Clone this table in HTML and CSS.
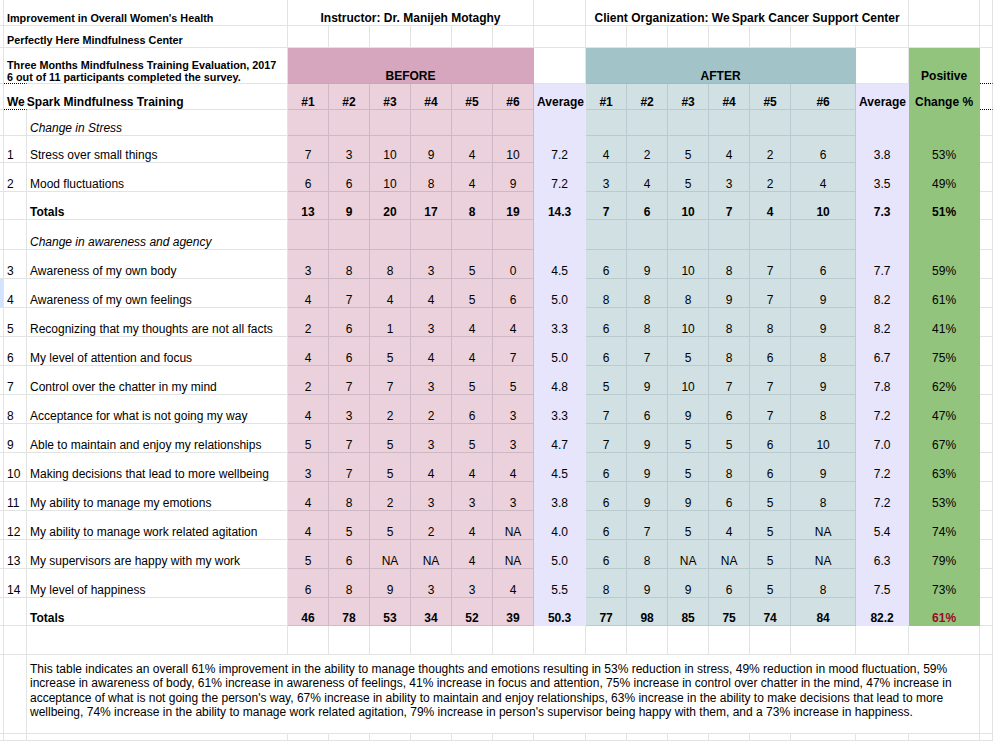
FILE: index.html
```html
<!DOCTYPE html>
<html lang="en">
<head>
<meta charset="utf-8">
<title>Mindfulness Training Evaluation</title>
<link rel="stylesheet" href="styles.css">
</head>
<body>
<table class="sheet">
  <colgroup>
    <col class="w-e"><col class="w-a"><col class="w-b">
    <col class="w-n"><col class="w-n"><col class="w-n"><col class="w-n"><col class="w-n"><col class="w-n">
    <col class="w-avb">
    <col class="w-n"><col class="w-n"><col class="w-n"><col class="w-n"><col class="w-n"><col class="w-n6">
    <col class="w-ava"><col class="w-pos"><col class="w-x">
  </colgroup>
  <tbody>
    <tr class="h26">
      <td class="e"></td><td colspan="2" class="t">Improvement in Overall Women's Health</td>
      <td colspan="6" class="hc">Instructor: Dr. Manijeh Motaghy</td>
      <td></td>
      <td colspan="7" class="hc">Client Organization: We<span class="sp">Spark</span> Cancer Support Center</td>
      <td></td><td class="x"></td>
    </tr>
    <tr class="h22">
      <td class="e"></td><td colspan="2" class="t">Perfectly Here Mindfulness Center</td>
      <td></td><td></td><td></td><td></td><td></td><td></td><td></td>
      <td></td><td></td><td></td><td></td><td></td><td></td><td></td>
      <td></td><td class="x"></td>
    </tr>
    <tr class="h36">
      <td class="e"></td><td class="ov t two">Three Months Mindfulness Training Evaluation, 2017<br>6 out of 11 participants completed the survey.</td><td></td>
      <td colspan="6" class="bh">BEFORE</td>
      <td></td>
      <td colspan="6" class="ah">AFTER</td>
      <td></td>
      <td class="gh">Positive</td>
      <td class="x dot"></td>
    </tr>
    <tr class="h26 dr b">
      <td class="e"></td><td class="ov">We<span class="sp">Spark</span> Mindfulness Training</td><td></td>
      <td>#1</td><td>#2</td><td>#3</td><td>#4</td><td>#5</td><td>#6</td><td>Average</td>
      <td>#1</td><td>#2</td><td>#3</td><td>#4</td><td>#5</td><td>#6</td><td>Average</td>
      <td>Change %</td><td class="x dot"></td>
    </tr>
    <tr class="h26 dr">
      <td class="e"></td><td></td><td class="it">Change in Stress</td>
      <td></td><td></td><td></td><td></td><td></td><td></td><td></td>
      <td></td><td></td><td></td><td></td><td></td><td></td><td></td>
      <td></td><td class="x"></td>
    </tr>
    <tr class="h27 dr">
      <td class="e"></td><td>1</td><td>Stress over small things</td>
      <td>7</td><td>3</td><td>10</td><td>9</td><td>4</td><td>10</td><td>7.2</td>
      <td>4</td><td>2</td><td>5</td><td>4</td><td>2</td><td>6</td><td>3.8</td>
      <td>53%</td><td class="x"></td>
    </tr>
    <tr class="h29 dr">
      <td class="e"></td><td>2</td><td>Mood fluctuations</td>
      <td>6</td><td>6</td><td>10</td><td>8</td><td>4</td><td>9</td><td>7.2</td>
      <td>3</td><td>4</td><td>5</td><td>3</td><td>2</td><td>4</td><td>3.5</td>
      <td>49%</td><td class="x"></td>
    </tr>
    <tr class="h28 dr b">
      <td class="e"></td><td></td><td>Totals</td>
      <td>13</td><td>9</td><td>20</td><td>17</td><td>8</td><td>19</td><td>14.3</td>
      <td>7</td><td>6</td><td>10</td><td>7</td><td>4</td><td>10</td><td>7.3</td>
      <td>51%</td><td class="x"></td>
    </tr>
    <tr class="h30 dr">
      <td class="e"></td><td></td><td class="it">Change in awareness and agency</td>
      <td></td><td></td><td></td><td></td><td></td><td></td><td></td>
      <td></td><td></td><td></td><td></td><td></td><td></td><td></td>
      <td></td><td class="x"></td>
    </tr>
    <tr class="h29 dr">
      <td class="e"></td><td>3</td><td>Awareness of my own body</td>
      <td>3</td><td>8</td><td>8</td><td>3</td><td>5</td><td>0</td><td>4.5</td>
      <td>6</td><td>9</td><td>10</td><td>8</td><td>7</td><td>6</td><td>7.7</td>
      <td>59%</td><td class="x"></td>
    </tr>
    <tr class="h29 dr">
      <td class="e sel"></td><td>4</td><td>Awareness of my own feelings</td>
      <td>4</td><td>7</td><td>4</td><td>4</td><td>5</td><td>6</td><td>5.0</td>
      <td>8</td><td>8</td><td>8</td><td>9</td><td>7</td><td>9</td><td>8.2</td>
      <td>61%</td><td class="x"></td>
    </tr>
    <tr class="h29 dr">
      <td class="e"></td><td>5</td><td>Recognizing that my thoughts are not all facts</td>
      <td>2</td><td>6</td><td>1</td><td>3</td><td>4</td><td>4</td><td>3.3</td>
      <td>6</td><td>8</td><td>10</td><td>8</td><td>8</td><td>9</td><td>8.2</td>
      <td>41%</td><td class="x"></td>
    </tr>
    <tr class="h29 dr">
      <td class="e"></td><td>6</td><td>My level of attention and focus</td>
      <td>4</td><td>6</td><td>5</td><td>4</td><td>4</td><td>7</td><td>5.0</td>
      <td>6</td><td>7</td><td>5</td><td>8</td><td>6</td><td>8</td><td>6.7</td>
      <td>75%</td><td class="x"></td>
    </tr>
    <tr class="h29 dr">
      <td class="e"></td><td>7</td><td>Control over the chatter in my mind</td>
      <td>2</td><td>7</td><td>7</td><td>3</td><td>5</td><td>5</td><td>4.8</td>
      <td>5</td><td>9</td><td>10</td><td>7</td><td>7</td><td>9</td><td>7.8</td>
      <td>62%</td><td class="x"></td>
    </tr>
    <tr class="h29 dr">
      <td class="e"></td><td>8</td><td>Acceptance for what is not going my way</td>
      <td>4</td><td>3</td><td>2</td><td>2</td><td>6</td><td>3</td><td>3.3</td>
      <td>7</td><td>6</td><td>9</td><td>6</td><td>7</td><td>8</td><td>7.2</td>
      <td>47%</td><td class="x"></td>
    </tr>
    <tr class="h29 dr">
      <td class="e"></td><td>9</td><td>Able to maintain and enjoy my relationships</td>
      <td>5</td><td>7</td><td>5</td><td>3</td><td>5</td><td>3</td><td>4.7</td>
      <td>7</td><td>9</td><td>5</td><td>5</td><td>6</td><td>10</td><td>7.0</td>
      <td>67%</td><td class="x"></td>
    </tr>
    <tr class="h29 dr">
      <td class="e"></td><td>10</td><td>Making decisions that lead to more wellbeing</td>
      <td>3</td><td>7</td><td>5</td><td>4</td><td>4</td><td>4</td><td>4.5</td>
      <td>6</td><td>9</td><td>5</td><td>8</td><td>6</td><td>9</td><td>7.2</td>
      <td>63%</td><td class="x"></td>
    </tr>
    <tr class="h29 dr">
      <td class="e"></td><td>11</td><td>My ability to manage my emotions</td>
      <td>4</td><td>8</td><td>2</td><td>3</td><td>3</td><td>3</td><td>3.8</td>
      <td>6</td><td>9</td><td>9</td><td>6</td><td>5</td><td>8</td><td>7.2</td>
      <td>53%</td><td class="x"></td>
    </tr>
    <tr class="h29 dr">
      <td class="e"></td><td>12</td><td>My ability to manage work related agitation</td>
      <td>4</td><td>5</td><td>5</td><td>2</td><td>4</td><td>NA</td><td>4.0</td>
      <td>6</td><td>7</td><td>5</td><td>4</td><td>5</td><td>NA</td><td>5.4</td>
      <td>74%</td><td class="x"></td>
    </tr>
    <tr class="h29 dr">
      <td class="e"></td><td>13</td><td>My supervisors are happy with my work</td>
      <td>5</td><td>6</td><td>NA</td><td>NA</td><td>4</td><td>NA</td><td>5.0</td>
      <td>6</td><td>8</td><td>NA</td><td>NA</td><td>5</td><td>NA</td><td>6.3</td>
      <td>79%</td><td class="x"></td>
    </tr>
    <tr class="h29 dr">
      <td class="e"></td><td>14</td><td>My level of happiness</td>
      <td>6</td><td>8</td><td>9</td><td>3</td><td>3</td><td>4</td><td>5.5</td>
      <td>8</td><td>9</td><td>9</td><td>6</td><td>5</td><td>8</td><td>7.5</td>
      <td>73%</td><td class="x"></td>
    </tr>
    <tr class="h28 dr b">
      <td class="e"></td><td></td><td>Totals</td>
      <td>46</td><td>78</td><td>53</td><td>34</td><td>52</td><td>39</td><td>50.3</td>
      <td>77</td><td>98</td><td>85</td><td>75</td><td>74</td><td>84</td><td>82.2</td>
      <td class="red">61%</td><td class="x"></td>
    </tr>
    <tr class="h29">
      <td class="e"></td><td></td><td></td>
      <td></td><td></td><td></td><td></td><td></td><td></td><td></td>
      <td></td><td></td><td></td><td></td><td></td><td></td><td></td>
      <td></td><td class="x"></td>
    </tr>
    <tr class="h79">
      <td class="e"></td><td></td>
      <td colspan="16" class="note">This table indicates an overall 61% improvement in the ability to manage thoughts and emotions resulting in 53% reduction in stress, 49% reduction in mood fluctuation, 59%<br>increase in awareness of body, 61% increase in awareness of feelings, 41% increase in focus and attention, 75% increase in control over chatter in the mind, 47% increase in<br>acceptance of what is not going the person's way, 67% increase in ability to maintain and enjoy relationships, 63% increase in the ability to make decisions that lead to more<br>wellbeing, 74% increase in the ability to manage work related agitation, 79% increase in person's supervisor being happy with them, and a 73% increase in happiness.</td>
      <td class="x"></td>
    </tr>
    <tr class="h7">
      <td class="e"></td><td></td><td></td>
      <td></td><td></td><td></td><td></td><td></td><td></td><td></td>
      <td></td><td></td><td></td><td></td><td></td><td></td><td></td>
      <td></td><td class="x"></td>
    </tr>
  </tbody>
</table>
</body>
</html>
```

FILE: styles.css
```css
html, body {
  margin: 0;
  padding: 0;
  background: #ffffff;
  overflow: hidden;
}

body {
  font-family: "Liberation Sans", Arial, sans-serif;
  font-size: 12px;
  color: #000000;
}

.sheet {
  table-layout: fixed;
  width: 993px;
  border-collapse: separate;
  border-spacing: 0;
}

.w-e { width: 4px; }
.w-a { width: 23px; }
.w-b { width: 261px; }
.w-n { width: 41px; }
.w-avb { width: 52px; }
.w-n6 { width: 65px; }
.w-ava { width: 53px; }
.w-pos { width: 71px; }
.w-x { width: 13px; }

.sheet td {
  border-right: 1px solid #e2e3e3;
  border-bottom: 1px solid #e2e3e3;
  padding: 0 3px 0;
  vertical-align: bottom;
  white-space: nowrap;
  line-height: 14px;
  overflow: visible;
}

.sheet td.e,
.sheet td.x {
  padding: 0;
}

.sheet td.sel {
  background: #d3e3fd;
}

.h26 { height: 26px; }
.h22 { height: 22px; }
.h36 { height: 36px; }
.h27 { height: 27px; }
.h28 { height: 28px; }
.h29 { height: 29px; }
.h30 { height: 30px; }
.h79 { height: 79px; }
.h7 { height: 7px; }

.sheet td.t {
  font-size: 10.8px;
  font-weight: bold;
}

.sheet td.two {
  line-height: 12px;
}

.sheet td.hc {
  text-align: center;
  font-weight: bold;
}

.sp {
  padding-left: 2px;
}

.sheet td.ov {
  border-right-color: transparent;
  border-bottom: 1px dotted #000000;
}

.sheet td.dot {
  border-bottom: 1px dotted #000000;
}

.sheet td.bh {
  background: #d5a6bd;
  border-right-color: #d5a6bd;
  border-bottom-color: #cfa3b8;
  text-align: center;
  font-weight: bold;
}

.sheet td.ah {
  background: #a2c4c9;
  border-right-color: #a2c4c9;
  border-bottom-color: #9dbdc2;
  text-align: center;
  font-weight: bold;
}

.sheet td.gh {
  background: #93c47d;
  border-right-color: #93c47d;
  border-bottom-color: #93c47d;
  text-align: center;
  font-weight: bold;
}

.b td {
  font-weight: bold;
}

.sheet td.it {
  font-style: italic;
}

.dr td:nth-child(n+4):nth-child(-n+9) {
  background: #ead1dc;
  border-right-color: #cdb8c3;
  border-bottom-color: #cdb8c3;
  text-align: center;
}

.dr td:nth-child(10),
.dr td:nth-child(17) {
  background: #e6e5fb;
  border-right-color: #e6e5fb;
  border-bottom-color: #e6e5fb;
  text-align: center;
}

.dr td:nth-child(n+11):nth-child(-n+16) {
  background: #d0e0e3;
  border-right-color: #b9cbce;
  border-bottom-color: #b9cbce;
  text-align: center;
}

.dr td:nth-child(18) {
  background: #93c47d;
  border-right-color: #93c47d;
  border-bottom-color: #93c47d;
  text-align: center;
}

.sheet td.red {
  color: #9c0b2c;
}

.sheet td.note {
  vertical-align: top;
  padding-top: 7px;
  line-height: 14.3px;
}
```
